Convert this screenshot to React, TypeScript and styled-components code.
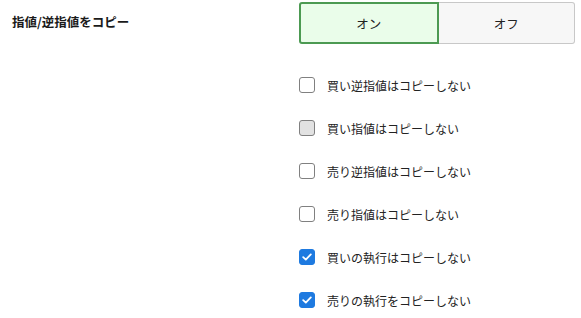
import styled, { createGlobalStyle } from "styled-components";
import { useState } from "react";

const GlobalStyle = createGlobalStyle`
  body {
    margin: 0;
    background: #ffffff;
    font-family: "Noto Sans CJK JP", "Noto Sans", sans-serif;
    color: #222;
  }
`;

const options = [
  { id: "buyStop", label: "買い逆指値はコピーしない", checked: false, disabled: false },
  { id: "buyLimit", label: "買い指値はコピーしない", checked: false, disabled: true },
  { id: "sellStop", label: "売り逆指値はコピーしない", checked: false, disabled: false },
  { id: "sellLimit", label: "売り指値はコピーしない", checked: false, disabled: false },
  { id: "buyExec", label: "買いの執行はコピーしない", checked: true, disabled: false },
  { id: "sellExec", label: "売りの執行をコピーしない", checked: true, disabled: false },
];

const App = () => {
  const [on, setOn] = useState(true);

  return (
    <>
      <GlobalStyle />
      <Setting>
        <Label>指値/逆指値をコピー</Label>
        <Controls>
          <Toggle>
            <ToggleButton $active={on} onClick={() => setOn(true)}>
              オン
            </ToggleButton>
            <ToggleButton $active={!on} onClick={() => setOn(false)}>
              オフ
            </ToggleButton>
          </Toggle>
          <List>
            {options.map((o) => (
              <Item key={o.id}>
                <Box $checked={o.checked} $disabled={o.disabled}>
                  {o.checked && (
                    <svg width="10" height="8" viewBox="0 0 10 8">
                      <path
                        d="M1.2 4.2 L3.8 6.6 L8.8 1.4"
                        fill="none"
                        stroke="#fff"
                        strokeWidth="1.8"
                        strokeLinecap="round"
                        strokeLinejoin="round"
                      />
                    </svg>
                  )}
                </Box>
                <ItemText>{o.label}</ItemText>
              </Item>
            ))}
          </List>
        </Controls>
      </Setting>
    </>
  );
};

const Setting = styled.div`
  display: grid;
  grid-template-columns: 287px 276px;
  padding: 2px 0 0 12px;
`;

const Label = styled.div`
  font-size: 12.5px;
  font-weight: 700;
  line-height: 18px;
  padding-top: 11px;
  color: #1a1a1a;
`;

const Controls = styled.div`
  display: flex;
  flex-direction: column;
`;

const Toggle = styled.div`
  display: flex;
  height: 42px;
`;

const ToggleButton = styled.button<{ $active: boolean }>`
  flex: 1;
  font-family: inherit;
  font-size: 12.5px;
  color: #222;
  cursor: pointer;
  background: ${(p) => (p.$active ? "#eafdea" : "#f7f7f7")};
  border: ${(p) => (p.$active ? "2px solid #4c9a52" : "1px solid #c8c8c8")};
  &:first-child {
    border-radius: 3px 0 0 3px;
  }
  &:last-child {
    border-radius: 0 3px 3px 0;
    border-left: none;
  }
`;

const List = styled.ul`
  list-style: none;
  margin: 0;
  padding: 32px 0 0;
  display: flex;
  flex-direction: column;
  gap: 25px;
`;

const Item = styled.li`
  display: flex;
  align-items: center;
  gap: 12px;
  height: 18px;
`;

const Box = styled.span<{ $checked: boolean; $disabled: boolean }>`
  width: 16px;
  height: 16px;
  box-sizing: border-box;
  border-radius: 3px;
  display: flex;
  align-items: center;
  justify-content: center;
  background: ${(p) => (p.$checked ? "#1e7ae0" : p.$disabled ? "#e2e2e2" : "#fff")};
  border: 1px solid ${(p) => (p.$checked ? "#1e7ae0" : "#808080")};
`;

const ItemText = styled.span`
  font-size: 12px;
  color: #222;
`;

export default App;
